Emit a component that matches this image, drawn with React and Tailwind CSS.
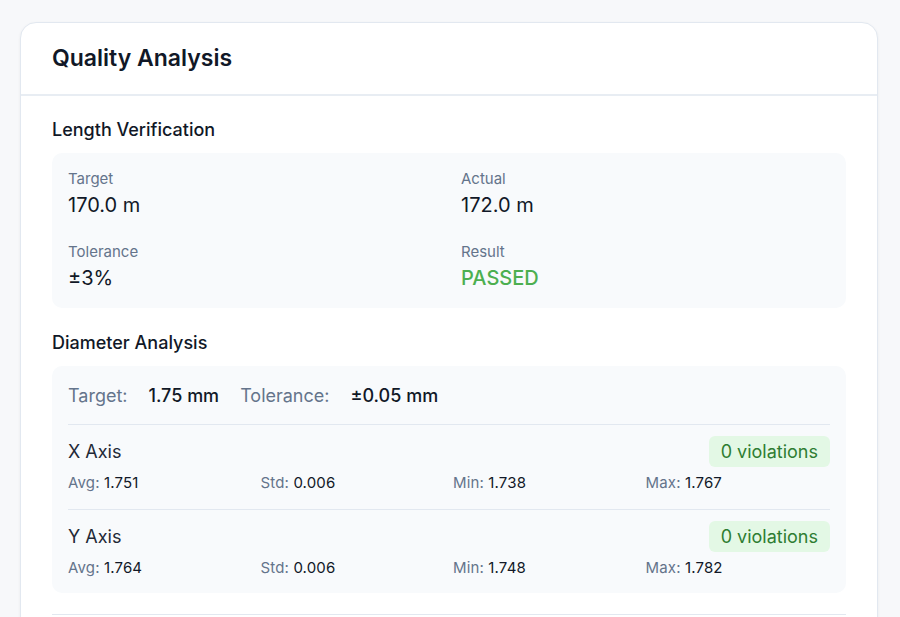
import React from 'react'

const axes = [
  { name: 'X Axis', violations: 0, avg: '1.751', std: '0.006', min: '1.738', max: '1.767' },
  { name: 'Y Axis', violations: 0, avg: '1.764', std: '0.006', min: '1.748', max: '1.782' },
]

function Stat({ label, value }) {
  return (
    <div className="text-[15px] leading-[22px] tracking-[0.01em]">
      <span className="text-[#64748b]">{label}:</span>{' '}
      <span className="text-[#111827]">{value}</span>
    </div>
  )
}

export default function App() {
  return (
    <div className="min-h-screen bg-[#f7f8fa] pt-[22px] pl-5 font-['Inter',sans-serif]">
      <div className="w-[858px] bg-white border border-[#e2e8f0] rounded-2xl shadow-[0_1px_3px_rgba(15,23,42,0.06)]">
        {/* Header */}
        <div className="px-[31px] py-[21px] border-b-2 border-[#e8edf3]">
          <h1 className="text-[23px] leading-[29px] font-semibold text-[#111827]">Quality Analysis</h1>
        </div>

        {/* Body */}
        <div className="px-[31px] pt-[22px] pb-8">
          {/* Length Verification */}
          <h2 className="text-[18px] leading-6 font-medium text-[#111827] mb-[11px]">Length Verification</h2>
          <div className="bg-[#f8fafc] rounded-[10px] p-4 grid grid-cols-2 gap-x-6 gap-y-[23px]">
            <div>
              <div className="text-[15px] leading-5 text-[#64748b]">Target</div>
              <div className="mt-0.5 text-[20px] leading-7 text-[#111827]">170.0 m</div>
            </div>
            <div>
              <div className="text-[15px] leading-5 text-[#64748b]">Actual</div>
              <div className="mt-0.5 text-[20px] leading-7 text-[#111827]">172.0 m</div>
            </div>
            <div>
              <div className="text-[15px] leading-5 text-[#64748b]">Tolerance</div>
              <div className="mt-0.5 text-[20px] leading-7 text-[#111827]">±3%</div>
            </div>
            <div>
              <div className="text-[15px] leading-5 text-[#64748b]">Result</div>
              <div className="mt-0.5 text-[20px] leading-7 font-medium text-[#4caf50]">PASSED</div>
            </div>
          </div>

          {/* Diameter Analysis */}
          <h2 className="mt-[23px] text-[18px] leading-6 font-medium text-[#111827] mb-[11px]">Diameter Analysis</h2>
          <div className="bg-[#f8fafc] rounded-[10px] px-4 pt-4 pb-[14px]">
            <div className="flex items-center gap-[21px] text-[18px] leading-7 pb-[14px] border-b border-[#e2e8f0]">
              <span className="text-[#64748b]">Target:</span>
              <span className="font-medium text-[#111827]">1.75 mm</span>
              <span className="text-[#64748b]">Tolerance:</span>
              <span className="font-medium text-[#111827]">±0.05 mm</span>
            </div>
            {axes.map((axis, idx) => (
              <div
                key={axis.name}
                className={`pt-[11px] ${idx < axes.length - 1 ? 'pb-[15px] border-b border-[#e2e8f0]' : ''}`}
              >
                <div className="flex items-center justify-between">
                  <span className="text-[18px] leading-7 text-[#1f2937]">{axis.name}</span>
                  <span className="bg-[#e3f8e5] text-[#2e7d32] text-[18px] leading-[27px] px-3 py-[2px] rounded-md">
                    {axis.violations} violations
                  </span>
                </div>
                <div className="mt-[5px] grid grid-cols-4 gap-2">
                  <Stat label="Avg" value={axis.avg} />
                  <Stat label="Std" value={axis.std} />
                  <Stat label="Min" value={axis.min} />
                  <Stat label="Max" value={axis.max} />
                </div>
              </div>
            ))}
          </div>

          <div className="mt-[21px] border-t border-[#e2e8f0] pt-6 h-40"></div>
        </div>
      </div>
    </div>
  )
}
